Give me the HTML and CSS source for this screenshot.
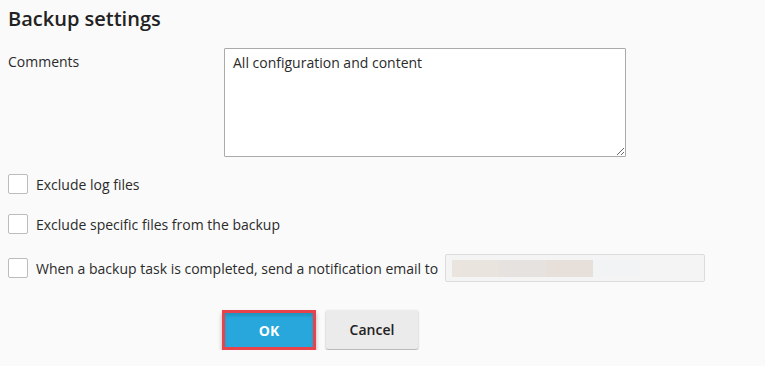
FILE: index.html
```html
<!DOCTYPE html>
<html>
<head>
<meta charset="utf-8">
<link rel="stylesheet" href="styles.css">
</head>
<body>
<div class="page">
  <h1 class="title">Backup settings</h1>
  <div class="field-row">
    <label class="field-label">Comments</label>
    <textarea class="comments">All configuration and content</textarea>
  </div>
  <div class="options">
    <label class="option"><input type="checkbox" class="check"><span>Exclude log files</span></label>
    <label class="option"><input type="checkbox" class="check"><span>Exclude specific files from the backup</span></label>
    <label class="option"><input type="checkbox" class="check"><span>When a backup task is completed, send a notification email to</span>
      <span class="email"><span class="blur b1"></span><span class="blur b2"></span><span class="blur b3"></span><span class="blur b4"></span></span>
    </label>
  </div>
  <div class="actions">
    <button class="btn btn-ok">OK</button>
    <button class="btn btn-cancel">Cancel</button>
  </div>
</div>
</body>
</html>
```
FILE: styles.css
```css
html, body {
  margin: 0;
  padding: 0;
  background: #fafafa;
}
body {
  font-family: "Open Sans", "Liberation Sans", sans-serif;
  font-size: 14px;
  color: #2b2b2b;
}
.page {
  padding: 5px 8px 0 8px;
}
.title {
  margin: 0;
  font-size: 20px;
  line-height: 27px;
  font-weight: 600;
  color: #222;
}
.field-row {
  display: grid;
  grid-template-columns: 216px 402px;
  margin-top: 16px;
}
.field-label {
  padding-top: 4px;
  line-height: 19px;
}
.comments {
  box-sizing: border-box;
  width: 402px;
  height: 109px;
  margin: 0;
  padding: 4px 8px;
  border: 1px solid #aaaaaa;
  border-radius: 1px;
  background: #fff;
  font-family: inherit;
  font-size: 14px;
  line-height: 19px;
  color: #2b2b2b;
  resize: vertical;
}
.options {
  display: flex;
  flex-direction: column;
  gap: 20px;
  margin-top: 17px;
}
.option {
  display: flex;
  align-items: center;
  line-height: 19px;
}
.check {
  appearance: none;
  -webkit-appearance: none;
  box-sizing: border-box;
  width: 20px;
  height: 20px;
  margin: 0 8px 0 0;
  border: 1px solid #bcbcbc;
  border-radius: 2px;
  background: #fff;
}
.email {
  box-sizing: border-box;
  display: flex;
  width: 260px;
  height: 28px;
  margin-left: 7px;
  padding: 5px 6px 4px 6px;
  border: 1px solid #dcdcdc;
  border-radius: 2px;
  background: #f4f4f4;
}
.blur {
  display: block;
  width: 47px;
  height: 17px;
}
.b1 { background: #e9e4de; }
.b2 { background: #e6e2df; }
.b3 { background: #e6dfda; }
.b4 { background: #f2f3f5; }
.actions {
  display: flex;
  gap: 10px;
  margin-top: 28px;
  padding-left: 214px;
}
.btn {
  box-sizing: border-box;
  font-family: inherit;
  font-size: 14px;
  cursor: pointer;
}
.btn-ok {
  width: 94px;
  height: 40px;
  border: 3px solid #e8434a;
  background: #27a7dc;
  color: #fff;
  font-weight: 700;
  box-shadow: inset 0 3px 3px rgba(0, 0, 0, 0.12), 0 3px 4px rgba(0, 0, 0, 0.3);
}
.btn-cancel {
  width: 92px;
  height: 39px;
  border: none;
  border-radius: 2px;
  background: #ebebeb;
  color: #222;
  font-weight: 600;
  box-shadow: 0 1px 2px rgba(0, 0, 0, 0.35);
}
```
